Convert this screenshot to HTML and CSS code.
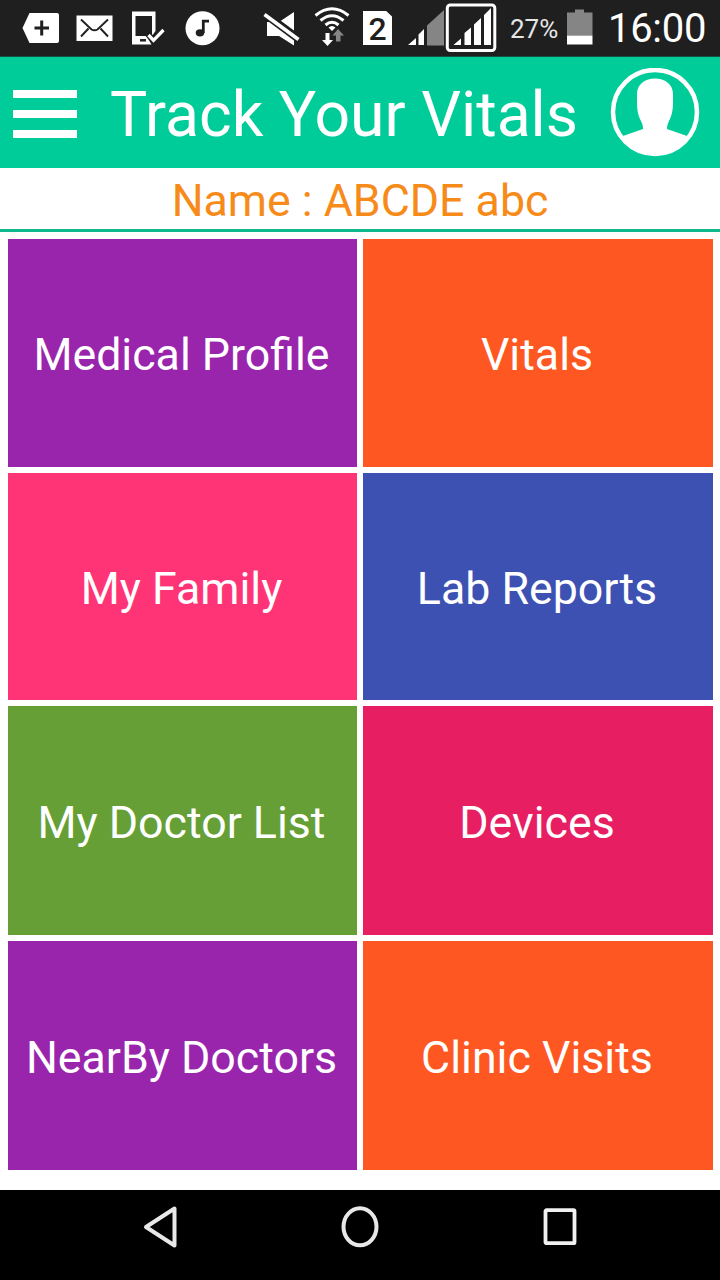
FILE: index.html
```html
<!DOCTYPE html>
<html lang="en">
<head>
    <meta charset="UTF-8">
    <title>Track Your Vitals</title>
    <link rel="stylesheet" href="styles.css">
</head>
<body>
    <div class="status-bar">
        <div class="status-left">
            <svg width="38" height="56" viewBox="22 0 38 56">
                <path d="M29.5 13H57q2 0 2 2V41q0 2-2 2H29.5L22.5 28z" fill="#fff"/>
                <path d="M34.5 28h14.5M41.7 20.5v15" stroke="#1f1f1f" stroke-width="3"/>
            </svg>
            <svg class="mail" width="38" height="56" viewBox="76 0 38 56">
                <path d="M76.5 15.5h36v25.500h-36z" fill="#fff"/>
                <path d="M81 19.500l10.500 10q3 1.500 6 0l10.500-10M81 36.500l7.500-8M108 36.500l-7.500-8" fill="none" stroke="#1f1f1f" stroke-width="1.900"/>
            </svg>
            <svg class="phone" width="34" height="56" viewBox="131 0 34 56">
                <path d="M132 11.500h23.500v19.500l-3.500 5v-20h-16.500v20h11l5 8.500H132z" fill="#fff"/>
                <path d="M140 40.300h6" stroke="#1f1f1f" stroke-width="2.500"/>
                <path d="M147.500 33.500l6 7l10-10.500" fill="none" stroke="#1f1f1f" stroke-width="6"/>
                <path d="M148.500 35l5 5.300l10-10.300" fill="none" stroke="#fff" stroke-width="3.300"/>
            </svg>
            <svg class="music" width="35" height="56" viewBox="185 0 35 56">
                <circle cx="202.500" cy="28.300" r="17" fill="#fff"/>
                <ellipse cx="200" cy="32.800" rx="4.300" ry="3.600" fill="#1f1f1f"/>
                <path d="M203.300 33V21.200h5.700" fill="none" stroke="#1f1f1f" stroke-width="2.800"/>
            </svg>
        </div>
        <div class="status-right">
            <svg width="37" height="56" viewBox="263 0 37 56">
                <path d="M267 22h12l15-10v33.500L279 36h-12z" fill="#fff"/>
                <path d="M263 12.500L300 40" stroke="#1f1f1f" stroke-width="8"/>
                <path d="M264.500 14.500l34 25" stroke="#fff" stroke-width="3.500"/>
            </svg>
            <svg width="36" height="56" viewBox="314 0 36 56">
                <g fill="none" stroke="#fff" stroke-width="3">
                    <path d="M315.500 15.500q16.500-13.500 33 0"/>
                    <path d="M320.500 20.500q11.500-9.500 23 0"/>
                    <path d="M325.500 25q6.500-5.500 13 0"/>
                </g>
                <path d="M328.500 27.500q3.500-3 7 0l-3.500 3.500z" fill="#fff"/>
                <path d="M325.500 33h4v7h3.500l-5.500 6l-5.500-6h3.500z" fill="#fff"/>
                <path d="M336 41.500h4.500v-6h3.500l-6-6.500l-5.500 6.500h3.500z" fill="#858585"/>
            </svg>
            <div class="sim">2</div>
            <svg class="signal" width="37" height="56" viewBox="408 0 37 56">
                <path d="M427 25.500l17-15.500v35.500h-17z" fill="#858585"/>
                <path d="M408 45l8-7v7zM418.500 45v-10.500l5.500-5.500v16z" fill="#fff"/>
            </svg>
            <svg width="52" height="56" viewBox="445 0 52 56">
                <rect x="447.300" y="5" width="47.500" height="45.500" rx="3" fill="none" stroke="#fff" stroke-width="3"/>
                <path d="M453.500 45l7.500-6.500v6.500zM464.500 45v-12l6.500-5.500V45zM474 45V24.500l7-6.500v27zM484 45V15l7-7v37z" fill="#fff"/>
            </svg>
            <span class="percent">27%</span>
            <svg class="battery" width="27" height="56" viewBox="567 0 27 56">
                <path d="M567 12.500h8v-3h9v3h8.500v23H567z" fill="#858585"/>
                <path d="M567 35.500h25.500v9H567z" fill="#fff"/>
            </svg>
            <span class="clock">16:00</span>
        </div>
    </div>

    <div class="header">
        <div class="menu">
            <span></span>
            <span></span>
            <span></span>
        </div>
        <h1>Track Your Vitals</h1>
        <svg class="avatar" width="90" height="90" viewBox="0 0 90 90">
            <circle cx="45" cy="44" r="42" fill="none" stroke="#fff" stroke-width="4.500"/>
            <path d="M45 10.500C56 10.500 63 17 63 26v9c0 9-2 14-4 18-2 4-2 6-2 8l20 7A38 38 0 0 1 13 68l20-7c0-2 0-4-2-8-2-4-4-9-4-18v-9c0-9 7-15.500 18-15.500z" fill="#fff"/>
        </svg>
    </div>

    <div class="name-bar"><span>Name : ABCDE abc</span></div>

    <div class="tiles">
        <div class="tile purple"><span>Medical Profile</span></div>
        <div class="tile orange"><span>Vitals</span></div>
        <div class="tile pink"><span>My Family</span></div>
        <div class="tile blue"><span>Lab Reports</span></div>
        <div class="tile green"><span>My Doctor List</span></div>
        <div class="tile red"><span>Devices</span></div>
        <div class="tile purple"><span>NearBy Doctors</span></div>
        <div class="tile orange"><span>Clinic Visits</span></div>
    </div>

    <div class="nav-bar">
        <svg width="36" height="46" viewBox="0 0 36 46">
            <path d="M32.500 4.500v37L4 23z" fill="none" stroke="#e8e8e8" stroke-width="4" stroke-linejoin="round"/>
        </svg>
        <svg width="40" height="46" viewBox="0 0 40 46">
            <ellipse cx="20" cy="22.800" rx="16.500" ry="18.500" fill="none" stroke="#e8e8e8" stroke-width="4"/>
        </svg>
        <svg width="36" height="46" viewBox="0 0 36 46">
            <rect x="3.500" y="6.200" width="29" height="33" rx="1" fill="none" stroke="#f0f0f0" stroke-width="3.800"/>
        </svg>
    </div>
</body>
</html>
```
FILE: styles.css
```css
* {
    box-sizing: border-box;
}

body {
    margin: 0;
    width: 720px;
    height: 1280px;
    overflow: hidden;
    display: flex;
    flex-direction: column;
    background-color: #fff;
    font-family: Roboto, "Liberation Sans", sans-serif;
}

svg {
    display: block;
    flex: none;
}

/* Android status bar */
.status-bar {
    height: 57px;
    display: flex;
    justify-content: space-between;
    padding: 0 13px 0 22px;
    background-color: #1f1f1f;
    border-bottom: 1px solid #17513f;
    color: #fff;
}

.status-left {
    display: flex;
}

.mail {
    margin-left: 16px;
}

.phone {
    margin-left: 17px;
}

.music {
    margin-left: 20px;
}

.status-right {
    display: flex;
    align-items: center;
}

.status-right svg + svg {
    margin-left: 14px;
}

.sim {
    width: 29px;
    height: 34px;
    margin: 0 16px 0 13px;
    background-color: #fff;
    clip-path: polygon(0 0, 80% 0, 100% 16%, 100% 100%, 0 100%);
    color: #1f1f1f;
    font-size: 32px;
    font-weight: 500;
    line-height: 37px;
    text-align: center;
}

.status-right .signal + svg {
    margin-left: 0;
}

.percent {
    width: 70px;
    padding: 2px 0 0 13px;
    font-size: 26px;
    color: #e6e6e6;
    line-height: 60px;
}

.clock {
    width: 113px;
    padding-left: 14px;
    font-size: 40px;
    line-height: 55px;
    letter-spacing: -0.3px;
    white-space: nowrap;
}

/* app header */
.header {
    height: 111px;
    display: flex;
    align-items: center;
    padding: 0 20px 0 13px;
    background-color: #00cc99;
    color: #fff;
}

.menu {
    width: 64px;
    display: flex;
    flex-direction: column;
    gap: 12px;
    padding-top: 3px;
}

.menu span {
    height: 8px;
    background-color: #fff;
}

h1 {
    flex: 1;
    margin: 0;
    padding: 5px 0 0 33px;
    font-size: 62.5px;
    font-weight: 400;
    line-height: 106px;
    white-space: nowrap;
}

.name-bar {
    height: 64px;
    border-bottom: 3px solid #0fb88a;
    color: #f68b1a;
    font-size: 44.7px;
    line-height: 66px;
    text-align: center;
}

.tiles {
    flex: 1;
    display: grid;
    grid-template-columns: 349px 350px;
    grid-template-rows: 228px 227px 229px 229px;
    gap: 6px;
    padding: 7px 8px;
}

.tile {
    display: flex;
    align-items: center;
    justify-content: center;
    padding: 4px 2px 0 0;
    color: #fff;
    font-size: 44.7px;
    white-space: nowrap;
}

.purple { background-color: #9a25ad; }
.orange { background-color: #ff5722; }
.pink { background-color: #ff3476; }
.blue { background-color: #3d51b3; }
.green { background-color: #669f35; }
.red { background-color: #e71e62; }

/* Android navigation buttons */
.nav-bar {
    height: 90px;
    display: flex;
    justify-content: space-between;
    padding: 14px 142px 0;
    background-color: #000;
}
```
